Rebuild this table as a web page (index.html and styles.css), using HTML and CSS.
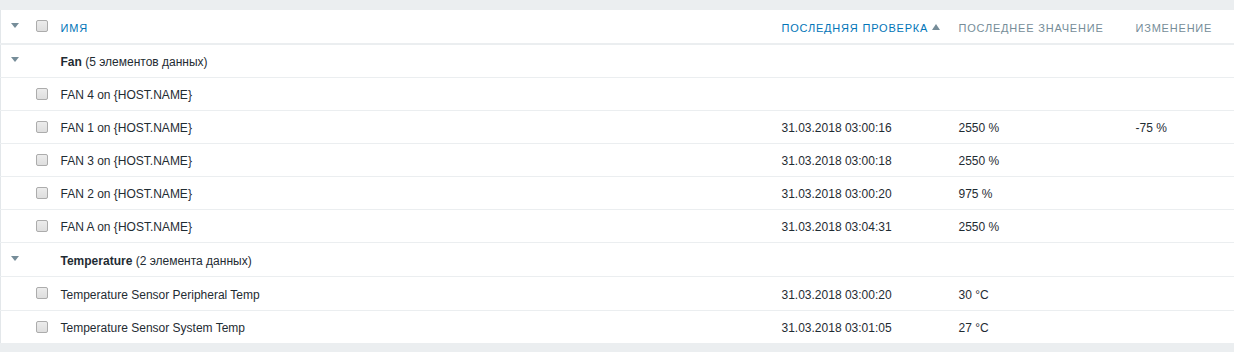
FILE: index.html
```html
<!DOCTYPE html>
<html lang="ru">
<head>
<meta charset="utf-8">
<title>Latest data</title>
<link rel="stylesheet" href="styles.css">
</head>
<body>
<div class="page">
  <table class="list">
    <colgroup>
      <col class="c-tog"><col class="c-cb"><col class="c-name"><col class="c-check"><col class="c-val"><col class="c-chg">
    </colgroup>
    <thead>
      <tr>
        <th class="tog"><span class="arrow"></span></th>
        <th class="cb"><span class="checkbox"></span></th>
        <th class="active">Имя</th>
        <th class="active">Последняя проверка <span class="sort-up"></span></th>
        <th>Последнее значение</th>
        <th>Изменение</th>
      </tr>
    </thead>
    <tbody>
      <tr class="group">
        <td class="tog"><span class="arrow"></span></td>
        <td></td>
        <td colspan="4"><b>Fan</b> (5 элементов данных)</td>
      </tr>
      <tr><td></td><td class="cb"><span class="checkbox"></span></td><td>FAN 4 on {HOST.NAME}</td><td></td><td></td><td></td></tr>
      <tr><td></td><td class="cb"><span class="checkbox"></span></td><td>FAN 1 on {HOST.NAME}</td><td>31.03.2018 03:00:16</td><td>2550 %</td><td>-75 %</td></tr>
      <tr><td></td><td class="cb"><span class="checkbox"></span></td><td>FAN 3 on {HOST.NAME}</td><td>31.03.2018 03:00:18</td><td>2550 %</td><td></td></tr>
      <tr><td></td><td class="cb"><span class="checkbox"></span></td><td>FAN 2 on {HOST.NAME}</td><td>31.03.2018 03:00:20</td><td>975 %</td><td></td></tr>
      <tr><td></td><td class="cb"><span class="checkbox"></span></td><td>FAN A on {HOST.NAME}</td><td>31.03.2018 03:04:31</td><td>2550 %</td><td></td></tr>
      <tr class="group tall">
        <td class="tog"><span class="arrow"></span></td>
        <td></td>
        <td colspan="4"><b>Temperature</b> (2 элемента данных)</td>
      </tr>
      <tr class="tall"><td></td><td class="cb"><span class="checkbox"></span></td><td>Temperature Sensor Peripheral Temp</td><td>31.03.2018 03:00:20</td><td>30 °C</td><td></td></tr>
      <tr><td></td><td class="cb"><span class="checkbox"></span></td><td>Temperature Sensor System Temp</td><td>31.03.2018 03:01:05</td><td>27 °C</td><td></td></tr>
    </tbody>
  </table>
</div>
</body>
</html>
```

FILE: styles.css
```css
html, body {
  margin: 0;
  padding: 0;
  background: #ebeef0;
}
body {
  font-family: "Liberation Sans", Arial, sans-serif;
  font-size: 12px;
  color: #1f2c33;
}
.page {
  padding-top: 10px;
  padding-bottom: 7px;
}
.list {
  width: 100%;
  table-layout: fixed;
  border-collapse: collapse;
  background: #fff;
  border-left: 1px solid #e3e7ea;
}
.c-tog { width: 27px; }
.c-cb { width: 28px; }
.c-name { width: 721px; }
.c-check { width: 177px; }
.c-val { width: 177px; }
.c-chg { width: auto; }

.list th, .list td {
  padding: 2px 5px 0;
  text-align: left;
  white-space: nowrap;
  vertical-align: middle;
}
.list th {
  height: 31px;
  border-bottom: 2px solid #ebeef0;
  font-weight: normal;
  font-size: 11px;
  text-transform: uppercase;
  letter-spacing: 0.8px;
  color: #768d99;
}
.list th.active { color: #0275b8; }
.list td {
  height: 30px;
  border-bottom: 1px solid #ebeef0;
}
.list tr.tall td { height: 31px; }

.list .tog { padding: 2px 0 0 10px; }
.list .cb { padding: 2px 0 0 8px; }

.arrow {
  display: inline-block;
  width: 0;
  height: 0;
  border-left: 4px solid transparent;
  border-right: 4px solid transparent;
  border-top: 5px solid #768d99;
  vertical-align: middle;
  position: relative;
  top: -3px;
}
.sort-up {
  display: inline-block;
  width: 0;
  height: 0;
  border-left: 4px solid transparent;
  border-right: 4px solid transparent;
  border-bottom: 6px solid #768d99;
  vertical-align: middle;
  position: relative;
  top: -2px;
}
.checkbox {
  display: inline-block;
  box-sizing: border-box;
  width: 12px;
  height: 12px;
  border: 1px solid #acacac;
  border-radius: 2px;
  background: linear-gradient(#ececec, #dedede);
  vertical-align: middle;
  position: relative;
  top: -2px;
}
.group b { font-weight: bold; }
```
